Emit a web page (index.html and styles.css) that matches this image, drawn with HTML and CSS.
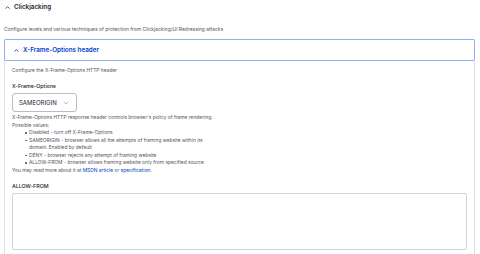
FILE: index.html
```html
<!DOCTYPE html>
<html>
<head>
<meta charset="utf-8">
<link rel="stylesheet" href="styles.css">
</head>
<body>
<div class="page">
  <div class="outer-summary">
    <svg class="chev" width="5" height="3" viewBox="0 0 5 3"><path d="M0.5 2.6 L2.5 0.6 L4.5 2.6" fill="none" stroke="#222330" stroke-width="0.8"/></svg>
    <span>Clickjacking</span>
  </div>
  <div class="outer-desc">Configure levels and various techniques of protection from Clickjacking/UI Redressing attacks</div>
  <div class="details">
    <div class="summary">
      <svg class="chev" width="5" height="3" viewBox="0 0 5 3"><path d="M0.5 2.6 L2.5 0.6 L4.5 2.6" fill="none" stroke="#003ecc" stroke-width="0.9"/></svg>
      <span>X-Frame-Options header</span>
    </div>
    <div class="content">
      <div class="desc">Configure the X-Frame-Options HTTP header</div>
      <div class="label">X-Frame-Options</div>
      <div class="select">
        <span>SAMEORIGIN</span>
        <svg width="6" height="4" viewBox="0 0 6 4"><path d="M0.7 0.9 L3 3 L5.3 0.9" fill="none" stroke="#8e929c" stroke-width="0.6"/></svg>
      </div>
      <div class="help">
        <div>X-Frame-Options HTTP response header controls browser's policy of frame rendering.</div>
        <div>Possible values:</div>
        <ul>
          <li>Disabled - turn off X-Frame-Options</li>
          <li>SAMEORIGIN - browser allows all the attempts of framing website within its<br>domain. Enabled by default</li>
          <li>DENY - browser rejects any attempt of framing website</li>
          <li>ALLOW-FROM - browser allows framing website only from specified source</li>
        </ul>
        <div>You may read more about it at <a href="#">MSDN article</a> or <a href="#">specification</a>.</div>
      </div>
      <div class="label label2">ALLOW-FROM</div>
      <div class="textarea"></div>
    </div>
  </div>
</div>
</body>
</html>
```

FILE: styles.css
```css
html, body {
  margin: 0;
  padding: 0;
  background: #ffffff;
  overflow: hidden;
}
body {
  font-family: Inter, "Noto Sans", sans-serif;
  color: #222330;
}
.page {
  padding: 0 5px 0 4px;
}
.outer-summary {
  height: 14px;
  display: flex;
  align-items: center;
  gap: 4px;
  padding-left: 1px;
  font-size: 6.3px;
  font-weight: 600;
}
.outer-desc {
  margin-top: 10px;
  height: 10px;
  line-height: 10px;
  font-size: 4.95px;
  color: #545560;
}
.details {
  margin-top: 5px;
  border-left: 1px solid #dedfe4;
  border-right: 1px solid #dedfe4;
  height: 216px;
}
.summary {
  margin: 0 -1px;
  height: 22px;
  box-sizing: border-box;
  border: 1.5px solid #8cb3f5;
  border-radius: 2px;
  display: flex;
  align-items: center;
  gap: 4px;
  padding-left: 9px;
  font-size: 6.3px;
  font-weight: 600;
  color: #003ecc;
}
.content {
  padding: 4px 7px 0 7px;
}
.desc {
  height: 10px;
  line-height: 10px;
  font-size: 4.9px;
  color: #545560;
}
.label {
  margin-top: 6px;
  height: 10px;
  line-height: 10px;
  font-size: 5.3px;
  font-weight: 500;
}
.select {
  margin-top: 2px;
  width: 65px;
  height: 19px;
  box-sizing: border-box;
  border: 1px solid #b9bcc4;
  border-radius: 3px;
  display: flex;
  align-items: center;
  justify-content: space-between;
  padding: 0 7px 0 6px;
  font-size: 6px;
  color: #222330;
}
.help {
  margin-top: 2px;
  font-size: 4.9px;
  line-height: 7.5px;
  color: #545560;
}
.help ul {
  margin: 0;
  padding-left: 17px;
  list-style: none;
}
.help li {
  position: relative;
}
.help li::before {
  content: "";
  position: absolute;
  left: -4px;
  top: 3px;
  width: 1.5px;
  height: 1.5px;
  border-radius: 50%;
  background: #545560;
}
.help a {
  color: #003ecc;
  text-decoration: none;
}
.label2 {
  margin-top: 7px;
}
.textarea {
  margin-top: 2px;
  height: 57px;
  box-sizing: border-box;
  border: 1px solid #cfd1d6;
  border-radius: 2px;
}
```
